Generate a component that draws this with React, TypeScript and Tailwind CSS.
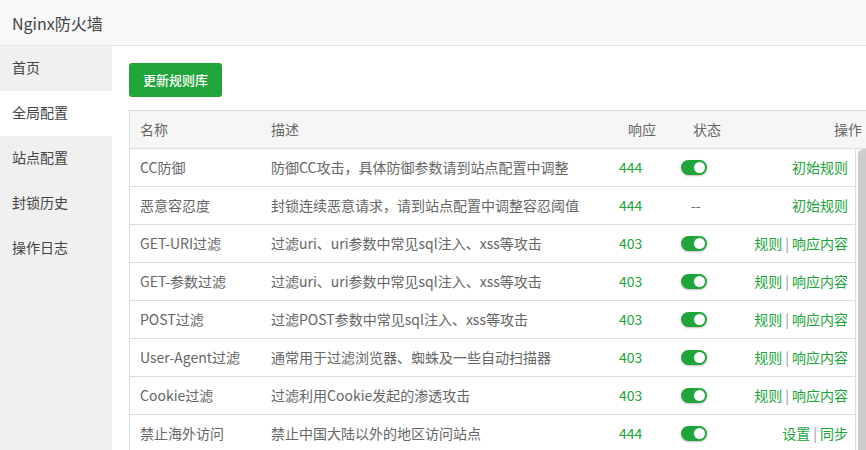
import React from 'react'

type Rule = {
  name: string
  desc: string
  code: string
  on: boolean | null
  ops: string[]
}

const rules: Rule[] = [
  { name: 'CC防御', desc: '防御CC攻击，具体防御参数请到站点配置中调整', code: '444', on: true, ops: ['初始规则'] },
  { name: '恶意容忍度', desc: '封锁连续恶意请求，请到站点配置中调整容忍阈值', code: '444', on: null, ops: ['初始规则'] },
  { name: 'GET-URI过滤', desc: '过滤uri、uri参数中常见sql注入、xss等攻击', code: '403', on: true, ops: ['规则', '响应内容'] },
  { name: 'GET-参数过滤', desc: '过滤uri、uri参数中常见sql注入、xss等攻击', code: '403', on: true, ops: ['规则', '响应内容'] },
  { name: 'POST过滤', desc: '过滤POST参数中常见sql注入、xss等攻击', code: '403', on: true, ops: ['规则', '响应内容'] },
  { name: 'User-Agent过滤', desc: '通常用于过滤浏览器、蜘蛛及一些自动扫描器', code: '403', on: true, ops: ['规则', '响应内容'] },
  { name: 'Cookie过滤', desc: '过滤利用Cookie发起的渗透攻击', code: '403', on: true, ops: ['规则', '响应内容'] },
  { name: '禁止海外访问', desc: '禁止中国大陆以外的地区访问站点', code: '444', on: true, ops: ['设置', '同步'] },
]

const menu = ['首页', '全局配置', '站点配置', '封锁历史', '操作日志']

function Toggle() {
  return (
    <div className="w-[26px] h-[15px] rounded-full bg-[#20a53a] flex items-center justify-end pr-[2px] shadow-[0_1px_2px_rgba(0,0,0,0.25)]">
      <div className="w-[11px] h-[11px] rounded-full bg-white" />
    </div>
  )
}

export default function App() {
  return (
    <div
      className="w-[866px] h-[450px] overflow-hidden bg-white flex flex-col text-[14px]"
      style={{ fontFamily: '"Microsoft YaHei", "Noto Sans CJK SC", sans-serif' }}
    >
      <div className="h-[46px] shrink-0 bg-[#f8f8f8] border-b border-[#e6e6e6] flex items-center pl-[12px]">
        <span className="text-[16px] text-[#444]">Nginx防火墙</span>
      </div>

      <div className="flex flex-1 min-h-0">
        <div className="w-[112px] shrink-0 bg-[#f0f0f0] flex flex-col">
          {menu.map((m, i) => (
            <div
              key={m}
              className={`h-[45px] flex items-center pl-[12px] pb-[2px] text-[#444] ${i === 1 ? 'bg-white' : ''}`}
            >
              {m}
            </div>
          ))}
        </div>

        <div className="flex-1 min-w-0 overflow-hidden pl-[17px] pt-[17px]">
          <button className="h-[34px] px-[14px] rounded-[3px] bg-[#20a53a] text-white text-[13px] font-medium">
            更新规则库
          </button>

          <div className="mt-[13px] w-[743px] border-l border-t border-[#ddd]">
            <div className="h-[38px] flex items-center bg-[#f6f6f6] border-b border-[#ddd] text-[#666]">
              <div className="w-[131px] pl-[10px]">名称</div>
              <div className="w-[357px] pl-[10px]">描述</div>
              <div className="w-[65px] pl-[10px]">响应</div>
              <div className="w-[70px] pl-[10px]">状态</div>
              <div className="flex-1 pr-[10px] text-right">操作</div>
            </div>

            <div className="flex">
              <div className="w-[726px]">
                {rules.map((r) => (
                  <div key={r.name} className="h-[38px] flex items-center border-b border-[#ddd] text-[#666]">
                    <div className="w-[131px] pl-[10px] whitespace-nowrap">{r.name}</div>
                    <div className="w-[348px] pl-[10px] whitespace-nowrap">{r.desc}</div>
                    <div className="w-[62px] pl-[10px] text-[#20a53a]">{r.code}</div>
                    <div className="w-[70px] pl-[10px] flex">
                      {r.on ? <Toggle /> : <span className="pl-[10px] text-[#666]">--</span>}
                    </div>
                    <div className="flex-1 pr-[7px] flex justify-end items-center text-[#20a53a] whitespace-nowrap">
                      {r.ops.map((o, i) => (
                        <React.Fragment key={o}>
                          {i > 0 && <span className="mx-[3px] text-[#999]">|</span>}
                          <a className="cursor-pointer">{o}</a>
                        </React.Fragment>
                      ))}
                    </div>
                  </div>
                ))}
              </div>
              <div className="w-[17px] border-l border-[#ddd] bg-[#f9f9f9] pl-[2px]">
                <div className="h-full bg-[#cdcdcd] rounded-t-[6px]" />
              </div>
            </div>
          </div>
        </div>
      </div>
    </div>
  )
}
